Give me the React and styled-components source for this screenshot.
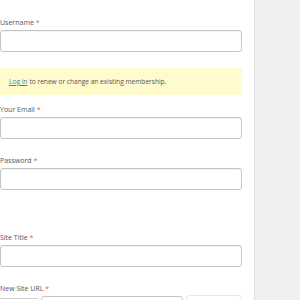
import React from "react";
import styled, { createGlobalStyle } from "styled-components";

const GlobalStyle = createGlobalStyle`
  html, body {
    margin: 0;
    padding: 0;
    background: #fff;
  }
  body {
    font-family: "Open Sans", "Noto Sans", sans-serif;
  }
`;

const fields = [
  { key: "email", label: "Your Email", space: 10 },
  { key: "password", label: "Password", space: 17 },
  { key: "title", label: "Site Title", space: 43 },
];

export default function App() {
  return (
    <>
      <GlobalStyle />
      <Page>
        <Main>
          <Field $space={18}>
            <Label>
              Username <Required>*</Required>
            </Label>
            <Input />
          </Field>
          <Notice>
            <NoticeLink>Log in</NoticeLink>
            <span>to renew or change an existing membership.</span>
          </Notice>
          {fields.map(({ key, label, space }) => (
            <Field key={key} $space={space}>
              <Label>
                {label} <Required>*</Required>
              </Label>
              <Input />
            </Field>
          ))}
          <Field $space={17}>
            <Label>
              New Site URL <Required>*</Required>
            </Label>
            <UrlRow>
              <UrlPrefix />
              <UrlInput />
              <UrlSuffix />
            </UrlRow>
          </Field>
        </Main>
        <Sidebar />
      </Page>
    </>
  );
}

const Page = styled.div`
  display: flex;
  height: 300px;
  overflow: hidden;
`;

const Main = styled.div`
  width: 242px;
  flex-shrink: 0;
  padding-right: 12px;
  display: flex;
  flex-direction: column;
`;

const Sidebar = styled.div`
  flex: 1;
  background-color: #efefef;
  border-left: 1px solid #e0e0e0;
`;

const Field = styled.div`
  flex-shrink: 0;
  display: flex;
  flex-direction: column;
  margin-top: ${(p) => p.$space}px;
`;

const Label = styled.label`
  display: block;
  font-size: 7px;
  line-height: 10px;
  color: #50575e;
  margin-bottom: 2px;
`;

const Required = styled.span`
  color: #e45c5c;
`;

const Input = styled.div`
  box-sizing: border-box;
  flex-shrink: 0;
  height: 22px;
  width: 242px;
  border: 1px solid #c4c4c4;
  border-radius: 3px;
  background: #fff;
  box-shadow: inset 0 1px 1px rgba(0, 0, 0, 0.05);
`;

const Notice = styled.div`
  box-sizing: border-box;
  flex-shrink: 0;
  margin-top: 16px;
  height: 27px;
  padding: 0 9px;
  display: flex;
  align-items: center;
  gap: 2px;
  background-color: #fffbcc;
  font-size: 6.6px;
  color: #555;
  white-space: nowrap;
`;

const NoticeLink = styled.a`
  color: #2b8cb5;
  text-decoration: underline;
`;

const UrlRow = styled.div`
  flex-shrink: 0;
  display: flex;
  align-items: flex-start;
  height: 22px;
`;

const UrlPrefix = styled.div`
  width: 38px;
  height: 20px;
  margin-top: 2px;
  border-top: 1px solid #d0d0d0;
`;

const UrlInput = styled.div`
  box-sizing: border-box;
  width: 142px;
  height: 22px;
  margin-left: 3px;
  border: 1px solid #c4c4c4;
  border-radius: 3px;
`;

const UrlSuffix = styled.div`
  box-sizing: border-box;
  flex: 1;
  height: 22px;
  margin-left: 3px;
  margin-top: -1px;
  border: 1px solid #e8e8e8;
  border-radius: 3px;
`;
